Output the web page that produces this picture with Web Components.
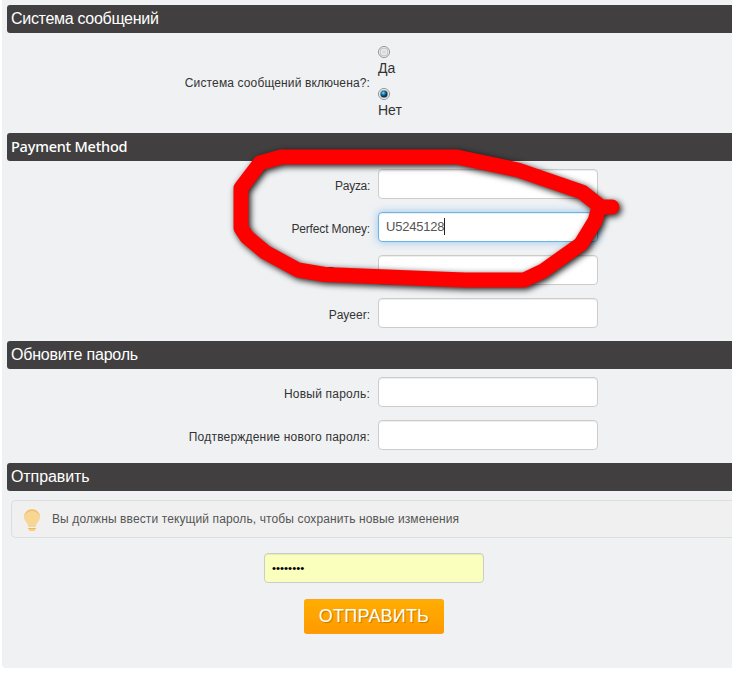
<!DOCTYPE html>
<html lang="ru"><head><meta charset="utf-8"><title>Настройки</title>
<style>
html,body{margin:0;background:#fff;overflow:hidden}
body{font-family:"Liberation Sans",Arial,sans-serif;width:732px;height:684px;position:relative}
</style></head><body>
<settings-panel>
<section-bar style="letter-spacing:-.3px">Система сообщений</section-bar>
<form-group style="--h:100px;--pt:0px">
<form-row tall label="Система сообщений включена?:" style="--ls:.13px"><radio-option>Да</radio-option><radio-option checked>Нет</radio-option></form-row>
</form-group>
<section-bar latin>Payment Method</section-bar>
<form-group style="--h:180px">
<form-row label="Payza:" style="--ls:-.3px"><text-box></text-box></form-row>
<form-row label="Perfect Money:" style="--ls:-.15px"><text-box focused>U5245128</text-box></form-row>
<form-row label="Egopay:"><text-box></text-box></form-row>
<form-row label="Payeer:"><text-box></text-box></form-row>
</form-group>
<section-bar style="letter-spacing:-.2px">Обновите пароль</section-bar>
<form-group style="--h:94px">
<form-row label="Новый пароль:" style="--ls:.22px"><text-box></text-box></form-row>
<form-row label="Подтверждение нового пароля:" style="--ls:.2px"><text-box></text-box></form-row>
</form-group>
<section-bar style="letter-spacing:-.1px">Отправить</section-bar>
<hint-box>Вы должны ввести текущий пароль, чтобы сохранить новые изменения</hint-box>
<submit-area><text-box filled>••••••••</text-box><submit-button>ОТПРАВИТЬ</submit-button></submit-area>
</settings-panel>
<marker-stroke></marker-stroke>
<script>
const make=(name,css,html,setup)=>customElements.define(name,class extends HTMLElement{
  constructor(){super();this.attachShadow({mode:'open'}).innerHTML=`<style>${css}</style>${html}`;}
  connectedCallback(){if(setup)setup(this,this.shadowRoot);}
});
make('settings-panel',`:host{display:block;box-sizing:border-box;height:668px;margin-left:2px;padding:5px 0 0 5px;background:#f0f1f3;border-bottom-left-radius:4px}`,`<slot></slot>`);
make('section-bar',`:host{display:block;box-sizing:border-box;height:28px;padding-left:4px;background:#413f40;color:#fff;border-radius:3px 0 0 3px;font-size:16px;line-height:27px;white-space:nowrap}
:host([latin]){font-family:"Noto Sans","Open Sans",sans-serif;font-size:14.5px;font-weight:500;line-height:27px;letter-spacing:-.22px}`,`<slot></slot>`);
make('form-group',`:host{display:flex;flex-direction:column;gap:13px;box-sizing:border-box;height:var(--h);padding-top:var(--pt,8px)}`,`<slot></slot>`);
make('form-row',`:host{display:grid;grid-template-columns:363px 1fr;column-gap:8px;height:30px}
:host([tall]){height:100px}
label{justify-self:end;align-self:center;padding-top:3px;font-size:12px;line-height:16px;letter-spacing:var(--ls,0);color:#333;white-space:nowrap}
:host([tall]) label{padding-top:0}
.f{display:flex;flex-direction:column}
:host([tall]) .f{padding-top:13px;gap:6px}`,`<label></label><div class="f"><slot></slot></div>`,(e,r)=>r.querySelector('label').textContent=e.getAttribute('label'));
make('radio-option',`:host{display:flex;flex-direction:column;height:36px;font-size:14px;line-height:20px;color:#333}
svg{width:12px;height:12px;display:block}.dot{display:none}:host([checked]) .dot{display:block}`,
`<svg viewBox="0 0 12 12"><defs><radialGradient id="g"><stop offset="0" stop-color="#d2d4d8"/><stop offset="1" stop-color="#f5f5f5"/></radialGradient><radialGradient id="b" cx=".4" cy=".35"><stop offset="0" stop-color="#8fe0fa"/><stop offset=".45" stop-color="#188bbd"/><stop offset="1" stop-color="#0b3453"/></radialGradient></defs><circle cx="6" cy="6" r="5.500" fill="#fff" stroke="#8e8f8f"/><circle cx="6" cy="6" r="4" fill="url(#g)" stroke="#a4a7ac" stroke-width=".7"/><circle class="dot" cx="6" cy="6" r="3.500" fill="url(#b)"/></svg><span><slot></slot></span>`);
make('text-box',`:host{display:flex;align-items:center;box-sizing:border-box;width:220px;height:30px;padding:0 7px;background:#fff;border:1px solid #ccc;border-radius:4px;box-shadow:inset 0 1px 1px rgba(0,0,0,.075);font-size:13px;color:#555}
:host([focused]){letter-spacing:-.22px;padding-bottom:2px;border-color:#6cb3ea;box-shadow:inset 0 1px 1px rgba(0,0,0,.075),0 0 8px rgba(82,168,236,.6)}
:host([filled]){background:#faffbd;color:#000;font-size:11.5px}
i{display:none;width:1px;height:17px;background:#222}:host([focused]) i{display:block}`,`<slot></slot><i></i>`);
make('hint-box',`:host{display:flex;align-items:center;box-sizing:border-box;height:38px;margin:9px 0 0 4px;padding-left:11px;gap:11px;background:#f0f0f0;border:1px solid #dcdddd;border-right:0;border-radius:5px 0 0 5px;font-size:12px;letter-spacing:.11px;color:#555;white-space:nowrap}
svg{width:18px;height:24px;margin-top:3px;flex:none}`,
`<svg viewBox="0 0 18 24"><path d="M5 18V16.500C4.500 13.500 1 12 1 8A8 8 0 0 1 17 8C17 12 13.500 13.500 13 16.500V18Z" fill="#f8d694"/><path d="M1 8A8 7.500 0 0 1 17 8C15.800 4.500 13 2 9 2S2.200 4.500 1 8Z" fill="#f1bd6c"/><path d="M5 19H13V20H5Z" fill="#eeb665"/><path d="M5.500 20H12.500L11.500 22H6.500Z" fill="#f5cf8a"/></svg><slot></slot>`);
make('submit-area',`:host{display:flex;flex-direction:column;align-items:center;width:220px;margin:15px 0 0 257px;gap:16px}`,`<slot></slot>`);
make('submit-button',`:host{display:flex;align-items:center;justify-content:center;box-sizing:border-box;width:140px;height:35px;border-radius:3px;background:linear-gradient(#ffad00,#ff9a00);border-top:1px solid #ffa41c;border-bottom:1px solid #fb9c14;color:#fff;font-size:18px;letter-spacing:.2px;text-shadow:1px 1px 1px rgba(0,0,0,.25)}`,`<slot></slot>`);
make('marker-stroke',`:host{position:absolute;left:0;top:0;width:732px;height:684px;pointer-events:none}svg{filter:drop-shadow(2px 2px 3px rgba(0,0,0,.9))}`,
`<svg width="732" height="684" viewBox="0 0 732 684"><path d="M612 207H601L582 192L518 170L457 157H281L260 163L241 188V228L247 237L265 252L298 270L325 274.500L425 278.500L465 280H524L543 271L581 244L595 221L599 207" fill="none" stroke="#f00" stroke-width="15" stroke-linejoin="round" stroke-linecap="round"/></svg>`);
</script></body></html>
